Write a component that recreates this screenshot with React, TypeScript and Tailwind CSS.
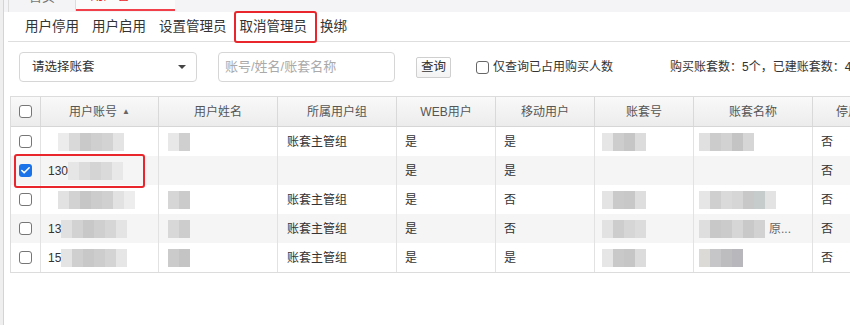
import { Check } from 'lucide-react';

type Row = {
  checked: boolean;
  acct: string;
  acctBlob: string[];
  nameBlob: string[];
  group: string;
  web: string;
  mobile: string;
  codeBlob: string[];
  setBlob: string[];
  setTail?: string;
  stop: string;
};

const rows: Row[] = [
  {
    checked: false,
    acct: '',
    acctBlob: ['bg-[#ececec]', 'bg-[#d9d9d9]', 'bg-[#c9c9c9]', 'bg-[#cfcfcf]', 'bg-[#d3d3d3]', 'bg-[#e4e4e4]'],
    nameBlob: ['bg-[#e8e8e8]', 'bg-[#cfcfcf]'],
    group: '账套主管组',
    web: '是',
    mobile: '是',
    codeBlob: ['bg-[#e6e6e6]', 'bg-[#cdcdcd]', 'bg-[#c6c6c6]', 'bg-[#dcdcdc]'],
    setBlob: ['bg-[#e0e0e0]', 'bg-[#cccccc]', 'bg-[#d2d2d2]', 'bg-[#c4c4c4]', 'bg-[#d6d6d6]'],
    stop: '否',
  },
  {
    checked: true,
    acct: '130',
    acctBlob: ['bg-[#e6e6e6]', 'bg-[#dcdcdc]', 'bg-[#d4d4d4]', 'bg-[#dadada]', 'bg-[#e8e8e8]'],
    nameBlob: [],
    group: '',
    web: '是',
    mobile: '是',
    codeBlob: [],
    setBlob: [],
    stop: '否',
  },
  {
    checked: false,
    acct: '',
    acctBlob: ['bg-[#e2e2e2]', 'bg-[#d2d2d2]', 'bg-[#c6c6c6]', 'bg-[#cccccc]', 'bg-[#d0d0d0]', 'bg-[#e2e2e2]', 'bg-[#ededed]'],
    nameBlob: ['bg-[#d6d6d6]', 'bg-[#cbcbcb]'],
    group: '账套主管组',
    web: '是',
    mobile: '否',
    codeBlob: ['bg-[#e4e4e4]', 'bg-[#cacaca]', 'bg-[#c8c8c8]', 'bg-[#dedede]'],
    setBlob: ['bg-[#e6e6e6]', 'bg-[#cfcfcf]', 'bg-[#dadada]', 'bg-[#d6d6d6]', 'bg-[#c8c8c8]', 'bg-[#c6cccc]', 'bg-[#e3e3e3]'],
    stop: '否',
  },
  {
    checked: false,
    acct: '13',
    acctBlob: ['bg-[#e0e0e0]', 'bg-[#d2d2d2]', 'bg-[#c8c8c8]', 'bg-[#cfcfcf]', 'bg-[#d6d6d6]', 'bg-[#e4e4e4]'],
    nameBlob: ['bg-[#d8d8d8]', 'bg-[#cdcdcd]'],
    group: '账套主管组',
    web: '是',
    mobile: '否',
    codeBlob: ['bg-[#e2e2e2]', 'bg-[#cdcdcd]', 'bg-[#d6d6d6]', 'bg-[#dcdcdc]'],
    setBlob: ['bg-[#dedede]', 'bg-[#c8c8c8]', 'bg-[#cbcbcb]', 'bg-[#d6d6d6]', 'bg-[#c9c9c9]', 'bg-[#d2d2d2]'],
    setTail: '原...',
    stop: '否',
  },
  {
    checked: false,
    acct: '15',
    acctBlob: ['bg-[#e4e4e4]', 'bg-[#cfcfcf]', 'bg-[#c8c8c8]', 'bg-[#cdcdcd]', 'bg-[#d4d4d4]', 'bg-[#e6e6e6]'],
    nameBlob: ['bg-[#cbcbcb]', 'bg-[#c4c4c4]'],
    group: '账套主管组',
    web: '是',
    mobile: '是',
    codeBlob: ['bg-[#e6e6e6]', 'bg-[#c9c9c9]', 'bg-[#c6c6c6]', 'bg-[#dcdcdc]'],
    setBlob: ['bg-[#dcdad6]', 'bg-[#c6c6c8]', 'bg-[#bdbdc0]', 'bg-[#b8b8bc]'],
    stop: '否',
  },
];

const cols = 'grid grid-cols-[30px_118px_119px_119px_99px_99px_99px_119px_70px]';

const Mosaic = ({ cells }: { cells: string[] }) => (
  <div className="flex h-[18px] blur-[0.7px]">
    {cells.map((c, i) => (
      <div key={i} className={`w-[11px] h-full ${c}`} />
    ))}
  </div>
);

const Box = ({ checked }: { checked: boolean }) =>
  checked ? (
    <span className="flex h-[13px] w-[13px] items-center justify-center rounded-[3px] bg-[#1a73e8]">
      <Check className="h-[11px] w-[11px] text-white" strokeWidth={3.5} />
    </span>
  ) : (
    <span className="block h-[13px] w-[13px] rounded-[3px] border border-[#767676] bg-white" />
  );

const headers = ['用户账号', '用户姓名', '所属用户组', 'WEB用户', '移动用户', '账套号', '账套名称'];

export default function App() {
  return (
    <div
      className="flex h-[325px] w-[850px] overflow-hidden bg-[#efefef] text-[#333]"
      style={{ fontFamily: '"Liberation Sans", "Noto Sans CJK SC", sans-serif' }}
    >
      <div className="w-[3px] shrink-0" />
      <div className="flex min-w-0 flex-1 flex-col border-l border-[#d4d4d4] bg-white">
        {/* tab strip */}
        <div className="flex h-[12px] overflow-hidden bg-[#f4f4f6] pl-[4px]">
          <div className="flex h-[12px] flex-1 border-l border-[#dcdcdc]">
            <div className="-mt-[18px] flex h-[30px] w-[66px] items-center justify-center text-[13px] text-[#777]">
              首页
            </div>
            <div className="flex h-[11px] w-[100px] flex-col border-l border-[#dcdcdc] bg-[#fbfbfb]">
              <div className="-mt-[19px] flex h-[28px] items-center justify-center gap-[10px] text-[13px]">
                <span className="text-[#e8262b]">用户管理</span>
                <span className="text-[#999]">×</span>
              </div>
              <div className="h-[2px] bg-[#f2404a]" />
            </div>
          </div>
        </div>

        {/* toolbar */}
        <div className="ml-[4px] flex h-[30px] items-center gap-[13px] border-b border-[#dedede] pl-[17px] pt-[2px] text-[13.5px] text-[#333]">
          <span>用户停用</span>
          <span>用户启用</span>
          <span>设置管理员</span>
          <span className="relative">
            取消管理员
            <span className="absolute -left-[6px] -top-[6px] h-[32px] w-[83px] rounded-[3px] border-2 border-[#e8262b]" />
          </span>
          <span>换绑</span>
        </div>

        {/* filters */}
        <div className="flex items-center whitespace-nowrap pl-[15px] pt-[10px]">
          <div className="flex h-[30px] w-[178px] shrink-0 items-center justify-between rounded-[4px] border border-[#d6d6d6] pl-[12px] pr-[10px] text-[12.5px] text-[#333]">
            <span>请选择账套</span>
            <span className="h-0 w-0 border-x-[4px] border-t-[4px] border-x-transparent border-t-[#444]" />
          </div>
          <div className="ml-[21px] flex h-[30px] w-[177px] shrink-0 items-center rounded-[4px] border border-[#d6d6d6] pl-[6px] text-[13px] text-[#aaa]">
            账号/姓名/账套名称
          </div>
          <div className="ml-[21px] flex h-[21px] w-[35px] shrink-0 items-center justify-center rounded-[2px] border border-[#cfcfcf] bg-linear-to-b from-white to-[#f3f3f3] text-[12.5px] text-[#333]">
            查询
          </div>
          <span className="ml-[25px] block h-[13px] w-[13px] shrink-0 rounded-[3px] border border-[#666]" />
          <span className="ml-[4px] shrink-0 text-[12px] text-[#333]">仅查询已占用购买人数</span>
          <span className="ml-[57px] shrink-0 text-[12px] text-[#333]">购买账套数：5个，已建账套数：4个</span>
        </div>

        {/* table */}
        <div className="relative ml-[6px] mt-[14px]">
          <div className="border-y border-l border-[#dcdcdc]">
            <div className={`${cols} h-[30px] border-b border-[#d6d6d6] bg-linear-to-b from-[#f9f9f9] to-[#ececec] text-[12px] text-[#555]`}>
              <div className="flex items-center justify-center border-r border-[#d9d9d9]">
                <Box checked={false} />
              </div>
              {headers.map((h, i) => (
                <div key={h} className="flex items-center justify-center border-r border-[#d9d9d9]">
                  {h}
                  {i === 0 && <span className="ml-[5px] text-[8px] text-[#666]">▲</span>}
                </div>
              ))}
              <div className="flex items-center justify-center whitespace-nowrap">停用</div>
            </div>

            {rows.map((r, i) => (
              <div
                key={i}
                className={`${cols} h-[29px] text-[12px] text-[#333] ${i % 2 === 1 ? 'bg-[#f5f5f5]' : 'bg-white'}`}
              >
                <div className="flex items-center justify-center border-r border-[#e2e2e2]">
                  <Box checked={r.checked} />
                </div>
                <div className="flex items-center border-r border-[#e2e2e2] pl-[7px]">
                  <span>{r.acct}</span>
                  <div className={r.acct ? '' : 'ml-[10px]'}>
                    <Mosaic cells={r.acctBlob} />
                  </div>
                </div>
                <div className="flex items-center border-r border-[#e2e2e2] pl-[9px]">
                  <Mosaic cells={r.nameBlob} />
                </div>
                <div className="flex items-center border-r border-[#e2e2e2] pl-[9px]">{r.group}</div>
                <div className="flex items-center border-r border-[#e2e2e2] pl-[8px]">{r.web}</div>
                <div className="flex items-center border-r border-[#e2e2e2] pl-[8px]">{r.mobile}</div>
                <div className="flex items-center border-r border-[#e2e2e2] pl-[7px]">
                  <Mosaic cells={r.codeBlob} />
                </div>
                <div className="flex items-center border-r border-[#e2e2e2] pl-[5px]">
                  <Mosaic cells={r.setBlob} />
                  {r.setTail && <span className="ml-[4px] text-[#666]">{r.setTail}</span>}
                </div>
                <div className="flex items-center pl-[8px]">{r.stop}</div>
              </div>
            ))}
          </div>
          <div className="pointer-events-none absolute left-[4px] top-[58px] h-[34px] w-[131px] rounded-[3px] border-2 border-[#e8262b]" />
        </div>
      </div>
    </div>
  );
}
